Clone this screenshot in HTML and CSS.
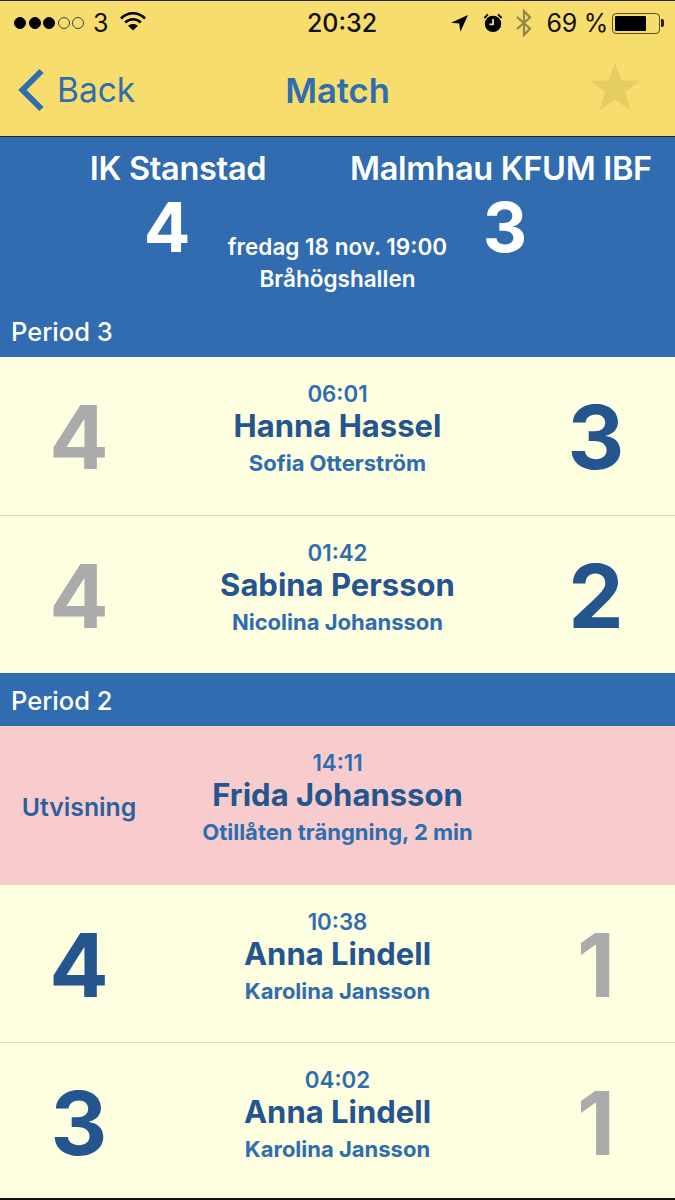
FILE: index.html
```html
<!DOCTYPE html>
<html lang="sv">
<head>
<meta charset="utf-8">
<title>Match</title>
<link rel="stylesheet" href="styles.css">
</head>
<body>
<div class="phone">
  <header class="top">
    <div class="status">
      <div class="status-side">
        <span class="dots"><i class="dot"></i><i class="dot"></i><i class="dot"></i><i class="dot off"></i><i class="dot off"></i></span>
        <span class="carrier">3</span>
        <svg class="wifi" width="26" height="19" viewBox="0 0 26 19"><path d="M1 6.500C8-.5 18-.5 25 6.500" fill="none" stroke="#000" stroke-width="2.600"/><path d="M5.200 10.500c4.600-4.300 11-4.300 15.600 0" fill="none" stroke="#000" stroke-width="2.600"/><path d="M13 18.500l-5-4.800c3-2.400 7-2.400 10 0z" fill="#000"/></svg>
      </div>
      <div class="clock">20:32</div>
      <div class="status-side right">
        <svg class="loc" width="19" height="19" viewBox="0 0 19 19"><path d="M18 1 1 8.800l8.200.6 1.200 8.400z" fill="#000"/></svg>
        <svg class="alarm" width="20" height="20" viewBox="0 0 22 22"><circle cx="11" cy="12" r="9" fill="#000"/><path d="M11 6.500V12.500H7" fill="none" stroke="#f6dd6e" stroke-width="2"/><path d="M1.500 5.500 5.500 1.500M20.500 5.500 16.500 1.500" stroke="#000" stroke-width="2"/></svg>
        <svg class="bt" width="18" height="28" viewBox="0 0 18 28"><path d="M2 8 15 19.500 9 26V2l6 6.500L2 20" fill="none" stroke="#93864a" stroke-width="2.200"/></svg>
        <span class="pct">69 %</span>
        <span class="battery"><span class="battery-level"></span></span><span class="battery-tip"></span>
      </div>
    </div>
    <nav class="nav">
      <div class="back">
        <svg width="28" height="46" viewBox="0 0 28 46"><path d="M24.500 4 5.500 23l19 19" fill="none" stroke="#2e6db0" stroke-width="6"/></svg>
        <span>Back</span>
      </div>
      <div class="title">Match</div>
      <svg class="star" width="50" height="48" viewBox="0 0 50 48"><path d="M25 0l6.500 17.500H50L35 29l5.500 18.500L25 36.500 9.500 47.500 15 29 0 17.500h18.500z" fill="#e6cd62"/></svg>
    </nav>
  </header>

  <section class="match">
    <div class="team home">
      <div class="team-name">IK Stanstad</div>
      <div class="team-score">4</div>
    </div>
    <div class="info">
      <div>fredag 18 nov. 19:00</div>
      <div>Bråhögshallen</div>
    </div>
    <div class="team away">
      <div class="team-name">Malmhau KFUM IBF</div>
      <div class="team-score">3</div>
    </div>
  </section>

  <div class="period">Period 3</div>
  <div class="row">
    <div class="score muted">4</div>
    <div class="event"><div class="time">06:01</div><div class="player">Hanna Hassel</div><div class="sub">Sofia Otterström</div></div>
    <div class="score">3</div>
  </div>
  <div class="row">
    <div class="score muted">4</div>
    <div class="event"><div class="time">01:42</div><div class="player">Sabina Persson</div><div class="sub">Nicolina Johansson</div></div>
    <div class="score">2</div>
  </div>
  <div class="period">Period 2</div>
  <div class="row penalty">
    <div class="label">Utvisning</div>
    <div class="event"><div class="time">14:11</div><div class="player">Frida Johansson</div><div class="sub">Otillåten trängning, 2 min</div></div>
    <div class="score"></div>
  </div>
  <div class="row">
    <div class="score">4</div>
    <div class="event"><div class="time">10:38</div><div class="player">Anna Lindell</div><div class="sub">Karolina Jansson</div></div>
    <div class="score muted">1</div>
  </div>
  <div class="row">
    <div class="score">3</div>
    <div class="event"><div class="time">04:02</div><div class="player">Anna Lindell</div><div class="sub">Karolina Jansson</div></div>
    <div class="score muted">1</div>
  </div>
</div>
</body>
</html>
```
FILE: styles.css
```css
* { box-sizing: border-box; }
html, body { margin: 0; padding: 0; }
body { width: 675px; height: 1200px; overflow: hidden; background: #000; font-family: Inter, "Liberation Sans", sans-serif; }
.phone { display: flex; flex-direction: column; width: 675px; height: 1200px; overflow: hidden; background: #fefee0; border-bottom: 2px solid #111; }

.top { height: 137px; padding-top: 3px; background: #f6dd6e; border-top: 1px solid #222; border-bottom: 1px solid #223; flex: none; }
.status { display: flex; align-items: center; justify-content: space-between; height: 38px; padding: 0 11px 0 14px; position: relative; }
.status-side { display: flex; align-items: center; }
.dots { display: flex; gap: 2.500px; }
.dot { width: 12px; height: 12px; border-radius: 50%; background: #000; border: 1px solid #000; }
.dot.off { background: transparent; border-color: #444; }
.carrier { font: 400 25px Inter, sans-serif; margin-left: 9px; color: #111; }
.wifi { margin-left: 12px; margin-top: -3px; }
.clock { position: absolute; left: 9px; right: 0; text-align: center; font-size: 25px; font-weight: 500; color: #111; }
.loc { margin-right: 14px; }
.alarm { margin-right: 12px; }
.bt { margin-right: 14px; }
.pct { font-size: 25px; font-weight: 400; color: #111; margin-right: 4px; letter-spacing: -.3px; }
.battery { width: 48px; height: 21px; padding: 2px; border: 1.500px solid #5e5320; border-radius: 4px; display: block; }
.battery-level { display: block; width: 31px; height: 100%; background: #000; border-radius: 1px; }
.battery-tip { width: 3px; height: 8px; background: #222; border-radius: 0 2px 2px 0; margin-left: 1px; }

.nav { position: relative; display: flex; align-items: center; justify-content: space-between; height: 94px; padding: 2px 35px 0 17px; }
.back { display: flex; align-items: center; gap: 12px; color: #2e6db0; font-size: 33.500px; font-weight: 400; }
.title { position: absolute; left: 0; right: 0; text-align: center; color: #2e6db0; font-size: 34.500px; font-weight: 600; }
.star { position: relative; margin-top: -6px; }

.match { position: relative; flex: none; height: 167px; background: #306caf; color: #fff; border-bottom: 1px solid #2f6aaa; }
.team { position: absolute; top: 14px; text-align: center; white-space: nowrap; }
.team.home { left: 78px; width: 200px; }
.team.away { left: 342px; width: 318px; }
.team-name { font-size: 32.500px; font-weight: 600; line-height: 35px; letter-spacing: -.3px; }
.team-score { font-size: 69px; font-weight: 700; line-height: 82px; }
.team.home .team-score { width: 178px; }
.team.away .team-score { width: 326px; }
.info { position: absolute; left: 0; right: 0; top: 94px; text-align: center; font-size: 22.500px; font-weight: 600; line-height: 32px; }

.period { flex: none; height: 53px; display: flex; align-items: center; padding: 2px 0 0 11px; background: #306caf; color: #fff; font-size: 25.500px; font-weight: 500; }

.row { flex: none; height: 158px; display: grid; grid-template-columns: 158px 1fr 158px; align-items: center; }
.row + .row { border-top: 1px solid #d9d9c4; }
.row.penalty { background: #f8cccd; }
.score { text-align: center; color: #24558f; font-size: 88px; font-weight: 700; line-height: 1; padding-top: 2px; }
.score.muted { color: #ababab; }
.label { text-align: center; color: #2c5f9e; font-size: 24.800px; font-weight: 600; margin-top: 3px; }
.event { text-align: center; margin-top: -10px; }
.time { color: #2e6db0; font-size: 22.300px; font-weight: 600; line-height: 24px; }
.player { color: #24558f; font-size: 31px; font-weight: 700; line-height: 40px; }
.sub { color: #2e6db0; font-size: 22px; font-weight: 700; line-height: 34px; }
```
